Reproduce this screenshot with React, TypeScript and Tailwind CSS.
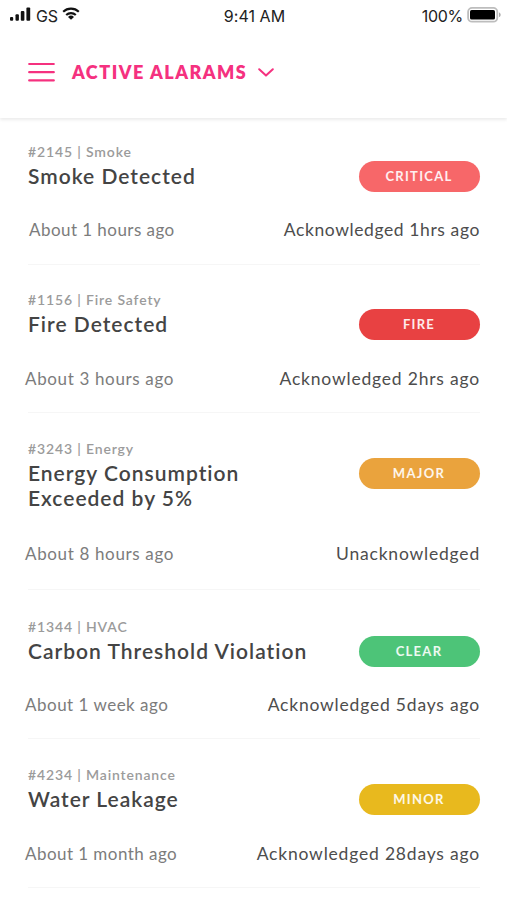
import clsx from "clsx";

type Alarm = {
  id: string;
  category: string;
  title: string[];
  level: string;
  badge: string;
  time: string;
  status: string;
  row: string;
  timeClass: string;
  statusClass: string;
  footer: string;
};

const alarms: Alarm[] = [
  {
    id: "#2145",
    category: "Smoke",
    title: ["Smoke Detected"],
    level: "CRITICAL",
    badge: "bg-[#f76769]",
    time: "About 1 hours ago",
    status: "Acknowledged 1hrs ago",
    row: "h-[147px] pt-6",
    timeClass: "pl-[29px] tracking-[0.45px]",
    statusClass: "tracking-[0.6px]",
    footer: "mb-[22px]",
  },
  {
    id: "#1156",
    category: "Fire Safety",
    title: ["Fire Detected"],
    level: "FIRE",
    badge: "bg-[#e84142]",
    time: "About 3 hours ago",
    status: "Acknowledged 2hrs ago",
    row: "h-[148px] pt-[25px]",
    timeClass: "pl-[25px] tracking-[0.65px]",
    statusClass: "tracking-[0.8px]",
    footer: "mb-[21px]",
  },
  {
    id: "#3243",
    category: "Energy",
    title: ["Energy Consumption", "Exceeded by 5%"],
    level: "MAJOR",
    badge: "bg-[#eaa33d]",
    time: "About 8 hours ago",
    status: "Unacknowledged",
    row: "h-[177px] pt-[26px]",
    timeClass: "pl-[25px] tracking-[0.65px]",
    statusClass: "tracking-[0.8px]",
    footer: "mb-[23px]",
  },
  {
    id: "#1344",
    category: "HVAC",
    title: ["Carbon Threshold Violation"],
    level: "CLEAR",
    badge: "bg-[#4dc478]",
    time: "About 1 week ago",
    status: "Acknowledged 5days ago",
    row: "h-[149px] pt-[27px]",
    timeClass: "pl-[25px] tracking-[0.5px]",
    statusClass: "tracking-[0.8px]",
    footer: "mb-[21px]",
  },
  {
    id: "#4234",
    category: "Maintenance",
    title: ["Water Leakage"],
    level: "MINOR",
    badge: "bg-[#e8b91e]",
    time: "About 1 month ago",
    status: "Acknowledged 28days ago",
    row: "h-[149px] pt-[26px]",
    timeClass: "pl-[25px] tracking-[0.45px]",
    statusClass: "tracking-[0.8px]",
    footer: "mb-[21px]",
  },
];

function StatusBar() {
  return (
    <div className="flex h-8 justify-between font-['Inter',sans-serif] text-[16px] leading-8 tracking-[-0.3px] text-[#222]">
      <div className="flex w-[180px] pl-[10px]">
        <svg className="mt-[7px] h-[15px] w-[21px]" viewBox="0 0 21 15" fill="#111" aria-hidden="true">
          <rect x="0" y="10" width="3.2" height="3.7" rx="1" />
          <rect x="5.5" y="7.2" width="3.4" height="6.5" rx="1" />
          <rect x="10.8" y="4" width="3.6" height="9.7" rx="1" />
          <rect x="16.4" y="0.5" width="3.8" height="13.2" rx="1" />
        </svg>
        <span className="ml-[5px] w-[22px]">GS</span>
        <svg className="ml-[4px] mt-[7px] h-[13px] w-[18px]" viewBox="0 0 18 13" aria-hidden="true">
          <path d="M1.2 4.8a11.2 11.2 0 0 1 15.6 0M4.2 8.1a6.9 6.9 0 0 1 9.6 0" fill="none" stroke="#111" strokeWidth="2.1" />
          <path d="M9 12.8 6 9.9a4.3 4.3 0 0 1 6 0z" fill="#111" />
        </svg>
      </div>
      <span className="pl-[2px] tracking-[0.05px]">9:41 AM</span>
      <div className="flex w-[180px] justify-end pr-[6px]">
        <span>100%</span>
        <svg className="ml-[4px] mt-[7px] h-[16px] w-[34px]" viewBox="0 0 34 16" aria-hidden="true">
          <rect x="1.1" y="0.9" width="29.2" height="13.8" rx="4" fill="#fff" stroke="#bdbdbd" strokeWidth="1.8" />
          <rect x="3" y="3" width="25" height="9.6" rx="1.6" fill="#000" />
          <path d="M32 5.5c2.2.6 2.2 4 0 4.6z" fill="#aaa" />
        </svg>
      </div>
    </div>
  );
}

function Header() {
  return (
    <header className="flex h-[118px] flex-col bg-white shadow-[0_2px_3px_rgba(0,0,0,0.08)]">
      <StatusBar />
      <div className="flex h-20 items-center pl-7 text-[#f5317f]">
        <button type="button" aria-label="Open menu">
          <svg className="h-[20px] w-[27px]" viewBox="0 0 27 20" fill="none" stroke="currentColor" strokeWidth="2.2" strokeLinecap="round" aria-hidden="true">
            <path d="M1.2 2h24.6M1.2 10.2h24.6M1.2 18.4h24.6" />
          </svg>
        </button>
        <button type="button" className="ml-[17px] flex items-center">
          <span className="w-[186px] text-left text-[18px] font-extrabold tracking-[1.5px] whitespace-nowrap">ACTIVE ALARAMS</span>
          <svg className="h-[9px] w-[16px]" viewBox="0 0 16 9" fill="none" stroke="currentColor" strokeWidth="2" strokeLinecap="round" strokeLinejoin="round" aria-hidden="true">
            <path d="m1.2 1.2 6.8 6.4 6.8-6.4" />
          </svg>
        </button>
      </div>
    </header>
  );
}

function AlarmRow({ alarm }: { alarm: Alarm }) {
  return (
    <li className={clsx("flex flex-col", alarm.row)}>
      <div className="flex items-start justify-between pr-[27px] pl-7">
        <div>
          <p className="text-[14px] leading-5 font-semibold tracking-[0.85px] text-[#9b9b9b]">
            {alarm.id} | {alarm.category}
          </p>
          <h2 className="mt-[1px] text-[21px] leading-[25px] font-semibold tracking-[1px] text-[#444]">
            {alarm.title.map((line) => (
              <span key={line} className="block whitespace-nowrap">{line}</span>
            ))}
          </h2>
        </div>
        <span
          className={clsx(
            "mt-[19px] flex h-[31px] w-[121px] shrink-0 items-center justify-center rounded-full pt-[1px] pr-[1px] text-[13px] font-bold tracking-[1.3px] text-white/90",
            alarm.badge
          )}
        >
          {alarm.level}
        </span>
      </div>
      <div className={clsx("mt-auto flex h-6 shrink-0 justify-between pr-[27px] text-[17px] leading-6", alarm.footer)}>
        <span className={clsx("text-[#7c7c7c]", alarm.timeClass)}>{alarm.time}</span>
        <span className={clsx("text-[17.5px] text-[#4d4d4d]", alarm.statusClass)}>{alarm.status}</span>
      </div>
      <div className="mr-[27px] ml-7 h-px shrink-0 bg-[#f6f6f6]" />
    </li>
  );
}

export default function App() {
  return (
    <main className="h-[900px] w-[507px] overflow-hidden bg-white font-['Lato',sans-serif]">
      <Header />
      <ul>
        {alarms.map((alarm) => (
          <AlarmRow key={alarm.id} alarm={alarm} />
        ))}
      </ul>
    </main>
  );
}
